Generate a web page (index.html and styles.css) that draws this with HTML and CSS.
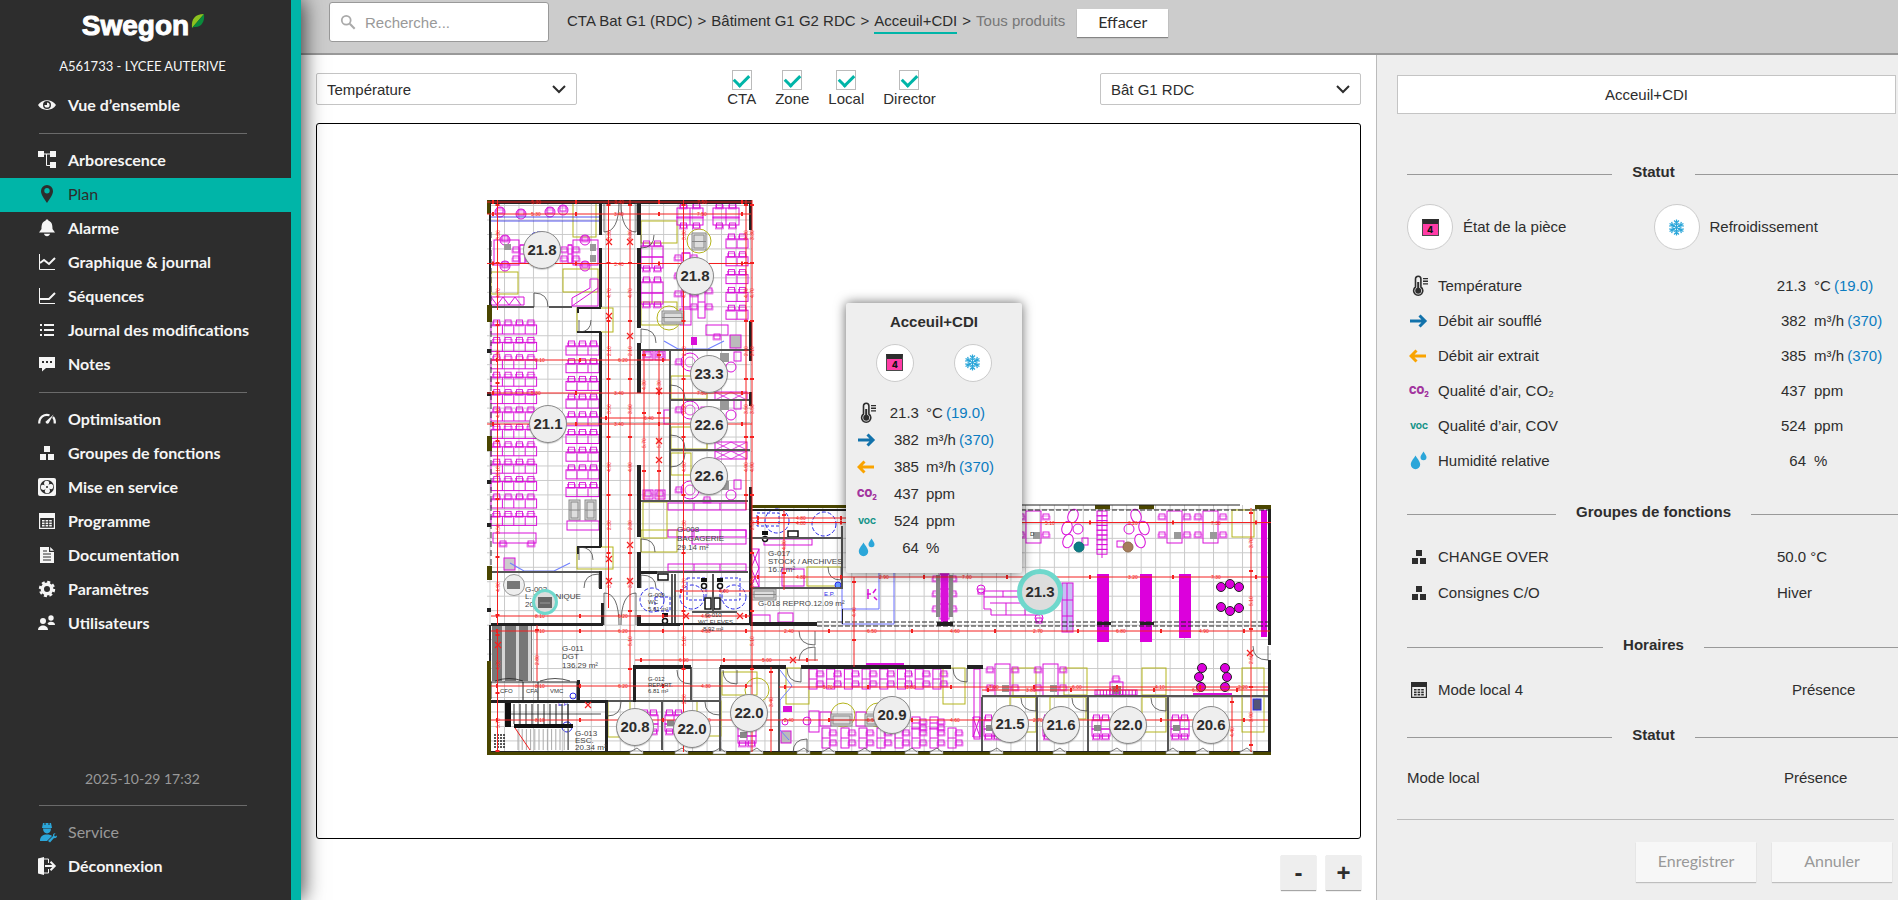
FILE: index.html
```html
<!DOCTYPE html>
<html lang="fr">
<head>
<meta charset="utf-8">
<title>Swegon - Plan</title>
<link rel="stylesheet" href="styles.css">
</head>
<body>
<svg class="defs" aria-hidden="true">
  <symbol id="i-groups" viewBox="0 0 18 18"><path d="M6 2h6v6H6zM2 10h6v6H2zM10 10h6v6h-6z"/></symbol>
  <symbol id="i-cal" viewBox="0 0 18 18"><path d="M1 1h16v16H1zM2.200 6v9.800h13.600V6z" fill-rule="evenodd"/><path d="M4 8h2.600v1.600H4zM7.600 8h2.600v1.600H7.600zM11.200 8h2.600v1.600h-2.600zM4 10.400h2.600V12H4zM7.600 10.400h2.600V12H7.600zM11.200 10.400h2.600V12h-2.600zM4 12.800h2.600v1.600H4zM7.600 12.800h2.600v1.600H7.600zM11.200 12.800h2.600v1.600h-2.600z"/></symbol>
  <symbol id="i-snow" viewBox="0 0 18 18"><g fill="none" stroke="#2ba6d9" stroke-width="1.300"><path id="arm" d="M9 9V.500M6.400 1.600 9 4.200l2.600-2.600M6.800 4.300 9 6.500l2.200-2.200"/><use href="#arm" transform="rotate(60 9 9)"/><use href="#arm" transform="rotate(120 9 9)"/><use href="#arm" transform="rotate(180 9 9)"/><use href="#arm" transform="rotate(240 9 9)"/><use href="#arm" transform="rotate(300 9 9)"/></g></symbol>
  <symbol id="i-temp" viewBox="0 0 20 22"><path d="M6.500 12V4a2.700 2.700 0 0 1 5.400 0v8a4.600 4.600 0 1 1-5.400 0z" fill="none" stroke="#2d2d2d" stroke-width="1.600"/><circle cx="9.200" cy="15.800" r="3"/><path d="M8.200 7h2v8h-2zM14 3h5v1.300h-5zM14 5.600h5v1.300h-5zM14 8.200h5v1.300h-5z"/></symbol>
  <symbol id="i-supply" viewBox="0 0 20 22"><path d="M1 11h15M10.500 5.500 16 11l-5.500 5.500" fill="none" stroke="#1272ab" stroke-width="3"/></symbol>
  <symbol id="i-extract" viewBox="0 0 20 22"><path d="M17 11H2M7.500 5.500 2 11l5.500 5.500" fill="none" stroke="#f9a300" stroke-width="3"/></symbol>
  <symbol id="i-hum" viewBox="0 0 20 22"><path fill="#2ba6d9" d="M6.500 5.500c2.500 4 4.700 6 4.700 9a4.700 4.700 0 0 1-9.400 0c0-3 2.200-5 4.700-9zM14.500 1.500c1.500 2.500 3 4 3 5.700a3 3 0 0 1-6 0c0-1.700 1.500-3.200 3-5.700z"/></symbol>
</svg>

<nav class="sidebar">
  <a class="logo" href="#"><span>Swegon</span><svg width="14" height="16" viewBox="0 0 14 16"><path fill="#8cc21f" d="M1 15C0 6 4 1 13 1z"/><path fill="#0a8a3c" d="M1 15 13 1c1 8-3 14-10 13z"/></svg></a>
  <p class="site">A561733 - LYCEE AUTERIVE</p>
  <ul class="menu">
    <li><a href="#"><svg viewBox="0 0 18 18"><path fill-rule="evenodd" d="M0 9c4-6.500 14-6.500 18 0-4 6.500-14 6.500-18 0zm9-4a4 4 0 1 0 0 8 4 4 0 0 0 0-8zm0 1.400a2.600 2.600 0 1 1-2.600 2.600L9 9z"/></svg>Vue d’ensemble</a></li>
  </ul>
  <hr>
  <ul class="menu">
    <li><a href="#"><svg viewBox="0 0 18 18"><path d="M0 0h6v6H0zM12 0h6v6h-6zM12 11h6v6h-6z"/><path d="M6 3h6M8.500 3v11.500H12" fill="none" stroke="#f5f5f5"/></svg>Arborescence</a></li>
    <li class="active"><a href="#"><svg viewBox="0 0 18 18"><path fill-rule="evenodd" d="M9 0a6 6 0 0 1 6 6c0 4-3.500 8-6 12-2.500-4-6-8-6-12a6 6 0 0 1 6-6zm0 3a2.700 2.700 0 1 0 0 5.400A2.700 2.700 0 0 0 9 3z"/></svg>Plan</a></li>
    <li><a href="#"><svg viewBox="0 0 18 18"><path d="M9 .500c.9 0 1.500.5 1.500 1.300C14 3 14.500 6 14.500 10L17 13.500H1L3.500 10C3.500 6 4 3 7.500 1.800 7.500 1 8.100.5 9 .5zM6 14.800h6c-.3 1.500-1.400 2.500-3 2.500s-2.700-1-3-2.500z"/></svg>Alarme</a></li>
    <li><a href="#"><svg viewBox="0 0 18 18"><path d="M1.500 1v15.500H17" fill="none" stroke="#f5f5f5"/><path d="m2 10 4-3 5 4 6-6" fill="none" stroke="#f5f5f5" stroke-width="2"/></svg>Graphique &amp; journal</a></li>
    <li><a href="#"><svg viewBox="0 0 18 18"><path d="M1.500 1v15.500H17" fill="none" stroke="#f5f5f5"/><path d="M2 12h9l6-6" fill="none" stroke="#f5f5f5" stroke-width="2"/></svg>Séquences</a></li>
    <li><a href="#"><svg viewBox="0 0 18 18"><path d="M2 3h2v2H2zM6 3h10v2H6zM2 8h2v2H2zM6 8h10v2H6zM2 13h2v2H2zM6 13h10v2H6z"/></svg>Journal des modifications</a></li>
    <li><a href="#"><svg viewBox="0 0 18 18"><path fill-rule="evenodd" d="M1 2h16v11H8l-4 3.500V13H1zm3 4v2h2V6zm4 0v2h2V6zm4 0v2h2V6z"/></svg>Notes</a></li>
  </ul>
  <hr>
  <ul class="menu">
    <li><a href="#"><svg viewBox="0 0 18 18"><path d="M1.200 13.500C1.200 7 6 3.800 11.500 5.300M15 7c1.400 1.500 2 4 1.800 6.500" fill="none" stroke="#f5f5f5" stroke-width="2.200"/><path d="M15.500 4.500 10.800 13c-1 1.500-3.800.5-3-1.500z"/></svg>Optimisation</a></li>
    <li><a href="#"><svg><use href="#i-groups"/></svg>Groupes de fonctions</a></li>
    <li><a href="#"><svg viewBox="0 0 18 18"><rect width="18" height="18" rx="2"/><circle cx="9" cy="9" r="7" fill="#2d2d2d"/><path id="blade" d="M9 9C5.500 8 5 3.500 8 2.800c3.500-.5 4.500 2.500 1 6.200z"/><use href="#blade" transform="rotate(90 9 9)"/><use href="#blade" transform="rotate(180 9 9)"/><use href="#blade" transform="rotate(270 9 9)"/><circle cx="9" cy="9" r="1" fill="#2d2d2d"/></svg>Mise en service</a></li>
    <li><a href="#"><svg><use href="#i-cal"/></svg>Programme</a></li>
    <li><a href="#"><svg viewBox="0 0 18 18"><path d="M2 1h9v5h5v11H2zM12.200 1 16 4.800h-3.800z"/><path d="M5 8h8M5 11h8M5 14h8M5 5h4" fill="none" stroke="#2d2d2d"/></svg>Documentation</a></li>
    <li><a href="#"><svg viewBox="0 0 18 18"><circle cx="9" cy="9" r="4.700" fill="none" stroke="#f5f5f5" stroke-width="3.400"/><circle cx="9" cy="9" r="7" fill="none" stroke="#f5f5f5" stroke-width="2.400" stroke-dasharray="3 2.498"/></svg>Paramètres</a></li>
    <li><a href="#"><svg viewBox="0 0 18 18"><circle cx="5" cy="7" r="3"/><path d="M0 16c0-6 10-6 10 0z"/><circle cx="13" cy="4" r="2.700"/><path d="M9.500 9.500c1.500-2.700 7.500-2.700 7.500 1.500h-6.200z"/></svg>Utilisateurs</a></li>
  </ul>
  <div class="sidebar-foot">
    <p class="clock">2025-10-29 17:32</p>
    <hr>
    <ul class="menu">
      <li class="muted"><a href="#"><svg viewBox="0 0 18 18"><path fill="#2ba6d9" d="M5 0h1.500v2h1V0h3v2h1V0H13l1 5H4zM5 5.500h8C13 12 5 12 5 5.500zM2 18c0-5 3-6.500 7-6.500 2.500 0 4 .5 5 1.500l-5 5zM10 18l5-5c-.3-2 1-3 2.500-2.500L16 12l1 1.500 2-1c.2 2-1.500 3-3 2.500L12 19.500z"/></svg>Service</a></li>
      <li><a href="#"><svg viewBox="0 0 18 18"><path d="M0 1.500 6 0v18l-6-1.500z"/><path d="M6 2h4.500v4M10.500 12v4H6" fill="none" stroke="#f5f5f5"/><path d="M7 9h9M12.500 4.800 16.700 9l-4.200 4.200" fill="none" stroke="#f5f5f5" stroke-width="2"/></svg>Déconnexion</a></li>
    </ul>
  </div>
</nav>

<div class="content">
  <header class="topbar">
    <label class="search"><svg viewBox="0 0 18 18" width="16" height="16"><circle cx="7" cy="7" r="5" fill="none" stroke="#aaa" stroke-width="2"/><path d="m11 11 5.500 5.500" stroke="#aaa" stroke-width="2.400"/></svg><input type="text" placeholder="Recherche..." aria-label="Recherche"></label>
    <nav class="crumbs"><a href="#">CTA Bat G1 (RDC)</a><i>&gt;</i><a href="#">Bâtiment G1 G2 RDC</a><i>&gt;</i><a href="#" class="current">Acceuil+CDI</a><i>&gt;</i><span>Tous produits</span></nav>
    <button class="btn" type="button">Effacer</button>
  </header>
  <div class="body">
    <main class="main">
      <div class="tools">
        <span class="select"><select aria-label="Mesure"><option>Température</option></select><svg viewBox="0 0 14 9"><path d="m1 1 6 6 6-6"/></svg></span>
        <div class="checks">
          <label><input type="checkbox" checked>CTA</label>
          <label><input type="checkbox" checked>Zone</label>
          <label><input type="checkbox" checked>Local</label>
          <label><input type="checkbox" checked>Director</label>
        </div>
        <span class="select"><select aria-label="Plan"><option>Bât G1 RDC</option></select><svg viewBox="0 0 14 9"><path d="m1 1 6 6 6-6"/></svg></span>
      </div>
      <div class="plan">
        <svg id="floor" class="floor" viewBox="317 124 1043 714"></svg>
        <div id="pins"></div>
        <section class="popup">
          <h2>Acceuil+CDI</h2>
          <div class="popup-states"><span class="disc"><i class="room">4</i></span><span class="disc"><svg><use href="#i-snow"/></svg></span></div>
          <ul class="readings">
            <li><svg><use href="#i-temp"/></svg><b>21.3</b><span>°C <em>(19.0)</em></span></li>
            <li><svg><use href="#i-supply"/></svg><b>382</b><span>m³/h <em>(370)</em></span></li>
            <li><svg><use href="#i-extract"/></svg><b>385</b><span>m³/h <em>(370)</em></span></li>
            <li><i class="co2">CO<small>2</small></i><b>437</b><span>ppm</span></li>
            <li><i class="voc">VOC</i><b>524</b><span>ppm</span></li>
            <li><svg><use href="#i-hum"/></svg><b>64</b><span>%</span></li>
          </ul>
        </section>
      </div>
      <div class="zoom"><button type="button">-</button><button type="button">+</button></div>
    </main>
    <aside class="panel">
      <div class="room-name">Acceuil+CDI</div>
      <div class="sections">
        <h3>Statut</h3>
        <div class="states">
          <div><span class="disc"><i class="room">4</i></span>État de la pièce</div>
          <div><span class="disc"><svg><use href="#i-snow"/></svg></span>Refroidissement</div>
        </div>
        <ul class="rows values">
          <li><svg><use href="#i-temp"/></svg><span>Température</span><b>21.3</b><span>°C <em>(19.0)</em></span></li>
          <li><svg><use href="#i-supply"/></svg><span>Débit air soufflé</span><b>382</b><span>m³/h <em>(370)</em></span></li>
          <li><svg><use href="#i-extract"/></svg><span>Débit air extrait</span><b>385</b><span>m³/h <em>(370)</em></span></li>
          <li><i class="co2">CO<small>2</small></i><span>Qualité d’air, CO₂</span><b>437</b><span>ppm</span></li>
          <li><i class="voc">VOC</i><span>Qualité d’air, COV</span><b>524</b><span>ppm</span></li>
          <li><svg><use href="#i-hum"/></svg><span>Humidité relative</span><b>64</b><span>%</span></li>
        </ul>
        <h3>Groupes de fonctions</h3>
        <ul class="rows groups">
          <li><svg><use href="#i-groups"/></svg><span>CHANGE OVER</span><span>50.0 °C</span></li>
          <li><svg><use href="#i-groups"/></svg><span>Consignes C/O</span><span>Hiver</span></li>
        </ul>
        <h3>Horaires</h3>
        <ul class="rows hours">
          <li><svg><use href="#i-cal"/></svg><span>Mode local 4</span><span>Présence</span></li>
        </ul>
        <h3>Statut</h3>
        <ul class="rows mode">
          <li><span>Mode local</span><span>Présence</span></li>
        </ul>
      </div>
      <div class="actions"><button class="btn" type="button" disabled>Enregistrer</button><button class="btn" type="button" disabled>Annuler</button></div>
    </aside>
  </div>
</div>
<script src="plan.js"></script>
</body>
</html>
```
FILE: styles.css
```css
* { box-sizing: border-box; }
body {
  margin: 0;
  min-height: 100vh;
  display: flex;
  background: #fff;
  color: #2d2d2d;
  font: 15px/20px "Liberation Sans", Arial, sans-serif;
}
ul, p, h2, h3 { margin: 0; padding: 0; list-style: none; }
a { color: inherit; text-decoration: none; }
button, input, select { font: inherit; color: inherit; }
.defs { position: absolute; width: 0; height: 0; }

.sidebar {
  flex: none;
  width: 301px;
  padding-top: 10px;
  display: flex;
  flex-direction: column;
  background: #2d2d2d;
  border-right: 10px solid #00b5a8;
  box-shadow: 2px 0 20px rgba(0, 0, 0, .75);
  color: #f5f5f5;
  font-family: Lato, sans-serif;
  z-index: 1;
}
.logo {
  display: flex;
  justify-content: center;
  align-items: flex-start;
  gap: 2px;
  height: 36px;
  padding-right: 4px;
  font: bold 28px/32px "Liberation Sans", Arial, sans-serif;
  -webkit-text-stroke: 1px #fff;
  color: #fff;
}
.logo svg { margin-top: 3px; }
.site { padding: 10px 6px 13px 0; text-align: center; font-size: 13px; }
.menu a {
  display: flex;
  align-items: center;
  gap: 12px;
  height: 34px;
  padding: 0 0 2px 38px;
  font-size: 16px;
  font-weight: 700;
}
.menu svg { width: 18px; height: 18px; fill: #f5f5f5; overflow: visible; }
.menu .active a { background: #00b5a8; color: #2d2d2d; font-weight: 400; }
.menu .active svg { fill: #2d2d2d; }
.menu .muted a { color: #999; font-weight: 400; }
.sidebar hr { width: 208px; margin: 10px 0 10px 39px; border: 0; border-top: 1px solid #6a6a6a; }
.sidebar-foot { margin-top: auto; padding-bottom: 16px; }
.clock { padding-right: 6px; margin-bottom: 16px; text-align: center; font-size: 14px; color: #999; }

.content { flex: 1; min-width: 0; display: flex; flex-direction: column; }
.topbar {
  display: flex;
  align-items: flex-start;
  height: 55px;
  padding-left: 28px;
  background: #ccc;
  border-bottom: 2px solid #999;
}
.search {
  display: flex;
  align-items: center;
  gap: 9px;
  width: 220px;
  height: 40px;
  margin: 2px 18px 0 0;
  padding-left: 10px;
  background: #fff;
  border: 1px solid #999;
  border-radius: 3px;
}
.search input { flex: 1; min-width: 0; border: 0; outline: 0; padding: 2px 0 0; background: none; }
.search input::placeholder { color: #999; opacity: 1; }
.crumbs { display: flex; margin: 10px 12px 0 0; line-height: 22px; }
.crumbs i { padding: 0 5px; font-style: normal; font-size: 15px; }
.crumbs span { color: #777; }
.crumbs .current { border-bottom: 2px solid #00b5a8; }
.btn {
  border: 0;
  background: #fff;
  box-shadow: 0 1px 1px rgba(0, 0, 0, .35);
  font-family: Lato, sans-serif;
  font-size: 16px;
}
.topbar .btn { width: 91px; height: 28px; margin-top: 9px; padding: 0 0 2px; }

.body { flex: 1; display: flex; }
.main { flex: 1; min-width: 0; padding: 15px 15px 10px; display: flex; flex-direction: column; }
.tools { display: flex; justify-content: space-between; height: 53px; }
.select { position: relative; width: 261px; height: 32px; margin-top: 3px; }
.select select {
  width: 100%;
  height: 100%;
  appearance: none;
  padding: 1px 30px 0 10px;
  background: #fff;
  border: 1px solid #c4c4c4;
  border-radius: 2px;
}
.select svg {
  position: absolute;
  right: 11px;
  top: 12px;
  width: 14px;
  height: 9px;
  fill: none;
  stroke: #2d2d2d;
  stroke-width: 2;
  pointer-events: none;
}
.checks { display: flex; gap: 19px; margin-right: 14px; }
.checks label { display: flex; flex-direction: column; align-items: center; line-height: 18px; }
.checks input {
  appearance: none;
  display: grid;
  place-items: center;
  width: 20px;
  height: 20px;
  margin: 0;
  border: 1px solid #bbb;
  background: #fff;
}
.checks input:checked::after {
  content: "";
  width: 12px;
  height: 7px;
  margin-bottom: 3px;
  border: solid #00b5a8;
  border-width: 0 0 3px 3px;
  transform: rotate(-45deg);
}
.plan { position: relative; border: 1px solid #000; border-radius: 3px; }
.floor { display: block; width: 100%; height: auto; }
.pin {
  position: absolute;
  transform: translate(-50%, -50%);
  width: 38px;
  height: 38px;
  padding: 0;
  border: 1px solid #8a8a8a;
  border-radius: 50%;
  background: #eee;
  box-shadow: 0 1px 1px rgba(0, 0, 0, .2);
  font-weight: 700;
}
.pin.selected { width: 46px; height: 46px; border: 5px solid #6fd8cc; background: #ddd; box-shadow: none; }
.popup {
  position: absolute;
  left: 51%;
  top: 25%;
  margin-left: -3px;
  width: 176px;
  padding: 9px 0 11px;
  background: #eee;
  border-radius: 2px;
  box-shadow: 0 0 12px rgba(0, 0, 0, .6);
}
.popup h2 { font-size: 15px; line-height: 20px; text-align: center; }
.disc {
  flex: none;
  display: grid;
  place-items: center;
  width: 46px;
  height: 46px;
  background: #fff;
  border: 1px solid #ccc;
  border-radius: 50%;
}
.disc svg { width: 17px; height: 17px; }
.room {
  width: 17px;
  height: 17px;
  background: #ff3ca6;
  border: 1px solid #4a4a4a;
  border-top: 5px solid #2d2d2d;
  color: #111;
  font: 800 9px/11px Inter, sans-serif;
  text-align: center;
}
.co2, .voc { font: 900 10px/12px Inter, sans-serif; color: #a2359e; white-space: nowrap; }
.co2 small { font-size: 7px; vertical-align: sub; line-height: 7px; }
.voc { font-size: 8px; font-weight: 800; color: #159488; padding-left: 1px; }
.popup-states { display: flex; justify-content: center; gap: 40px; margin: 12px 0 18px; }
.popup .disc { width: 38px; height: 38px; }
.readings li { display: grid; grid-template-columns: 20px 42px 1fr; align-items: center; height: 27px; padding-left: 11px; }
.readings svg, .rows svg { width: 20px; height: 22px; fill: #2d2d2d; }
b { font-weight: 400; text-align: right; }
.readings span { padding-left: 7px; white-space: nowrap; }
em { font-style: normal; color: #0b7cc1; margin-left: -1px; }
.zoom { display: flex; justify-content: flex-end; gap: 10px; padding-top: 16px; }
.zoom button { width: 35px; height: 35px; padding: 0; border: 0; background: #eee; box-shadow: 0 1px 1px rgba(0, 0, 0, .35); font: bold 24px/32px "Liberation Sans", Arial, sans-serif; }

.panel { flex: none; width: 522px; padding: 20px 0 18px 20px; overflow: hidden; background: #eee; border-left: 1px solid #bbb; display: flex; flex-direction: column; }
.room-name { width: 499px; height: 39px; border: 1px solid #c4c4c4; background: #fff; text-align: center; line-height: 37px; }
.sections { margin: 48px -2px 0 10px; }
.sections h3 { display: flex; align-items: center; gap: 20px; height: 20px; font-size: 15px; }
.sections h3::before, .sections h3::after { content: ""; flex: 1; height: 1px; margin-top: 4px; background: #999; }
.states { display: grid; grid-template-columns: 1fr 1fr; margin: 22px 0 18px; }
.states div { display: flex; align-items: center; gap: 10px; }
.rows li { display: grid; align-items: center; height: 36px; padding-left: 2px; }
.rows li > :first-child + span { padding-left: 9px; }
.rows b + span { padding-left: 8px; }
.values { margin-bottom: 24px; }
.values li { grid-template-columns: 20px 304px 73px 1fr; height: 35px; }
.groups { margin: 17px 0 24px; }
.groups li { grid-template-columns: 20px 348px 1fr; }
.hours { margin: 17px 0; }
.hours li { grid-template-columns: 20px 363px 1fr; }
.groups svg, .hours svg { height: 18px; }
.mode { margin-top: 15px; }
.mode li { grid-template-columns: 368px 1fr; padding-left: 0; }
.actions { display: flex; justify-content: flex-end; gap: 16px; margin: auto 4px 0 0; padding: 22px 2px 0 0; border-top: 1px solid #bbb; }
.actions .btn { width: 120px; height: 40px; padding: 0 0 3px; background: #f7f7f7; box-shadow: 0 1px 1px rgba(0, 0, 0, .2); color: #999; }
```
FILE: plan.js
```js
const svg = document.getElementById('floor');
let out = '';

const M = '#d911d9', R = '#f42020', K = '#222', Y = '#b5b51c', B = '#2a2ae8';
const path = (d, stroke, w = 1, extra = '') => `<path d="${d}" fill="none" stroke="${stroke}" stroke-width="${w}" ${extra}/>`;
const rect = (x, y, w, h, fill, stroke = 'none', sw = 1) => `<rect x="${x}" y="${y}" width="${w}" height="${h}" fill="${fill}" stroke="${stroke}" stroke-width="${sw}"/>`;
const line = (x1, y1, x2, y2, c, w = 1, extra = '') => path(`M${x1} ${y1}L${x2} ${y2}`, c, w, extra);
const circle = (x, y, r, fill, stroke, sw = 1) => `<circle cx="${x}" cy="${y}" r="${r}" fill="${fill}" stroke="${stroke}" stroke-width="${sw}"/>`;
const label = (x, y, size, t, c = '#333', rot = 0) => `<text x="${x}" y="${y}" font-size="${size}" fill="${c}" transform="rotate(${rot} ${x} ${y})">${t}</text>`;
const chair = (x, y) => rect(x, y, 6, 5, 'none', M, .9) + rect(x - 1, y + 2, 8, 4, 'none', M, .5);

// A row of n desks with one chair each, above (side -1) or below (side 1)
function desks(x, y, n, w, h, side) {
  let s = rect(x, y, n * w, h, 'none', M);
  for (let i = 0; i < n; i++) {
    if (i) s += line(x + i * w, y, x + i * w, y + h, M);
    s += side < 0 ? chair(x + i * w + w / 2 - 3, y - 5) : chair(x + i * w + w / 2 - 3, y + h - 2);
  }
  return s;
}
// A standing column of desks with chairs at both sides
function column(x, y, n, w, h) {
  let s = rect(x, y, w, n * h, 'none', M);
  for (let i = 0; i < n; i++) {
    s += line(x, y + i * h, x + w, y + i * h, M);
    s += chair(x - 7, y + i * h + 2) + chair(x + w + 1, y + i * h + 2);
  }
  return s;
}
// A standing pair of desks with chairs at the right side only
function pair(x, y, h) {
  return rect(x, y, 8, 2 * h, 'none', M) + line(x, y + h, x + 8, y + h, M) + chair(x + 8, y + 2) + chair(x + 8, y + h + 2);
}
const door = (x, y, dx, dy) => path(`M${x} ${y}v${dy}M${x} ${y + dy}Q${x + dx} ${y + dy} ${x + dx} ${y}`, '#444', .8);
const desk = (x, y) => rect(x, y, 15, 32, 'none', M) + rect(x + 7, y + 21, 7, 7, '#999') +
  chair(x - 8, y + 3) + chair(x - 8, y + 21) + chair(x + 17, y + 3) + chair(x + 17, y + 21);
const round = (x, y) => circle(x, y, 9, 'none', M) + circle(x, y, 5, 'none', M, .7) + chair(x - 14, y - 3) + chair(x + 11, y - 3) + chair(x + 14, y + 7);
const machine = (x, y, w, h) => rect(x, y, w, h, '#ddd', '#888') + rect(x + 2, y + 2, w - 4, h - 4, 'none', '#888') + line(x, y + h / 2, x + w, y + h / 2, '#888');
const cross = (x, y) => path(`M${x - 3} ${y - 3}l6 6M${x - 3} ${y + 3}l6 -6`, R, 1.2);

// Floor and tile grid
const outline = 'M487 200H752V505H1271V755H487z';
out += `<defs><pattern id="tiles" x="504" y="219.500" width="14.470" height="14.470" patternUnits="userSpaceOnUse"><path d="M.5 0V15M0 .5H15" stroke="#c9c9c9" stroke-width="1" fill="none"/></pattern></defs>`;
out += `<path d="${outline}" fill="#fff"/><path d="${outline}" fill="url(#tiles)"/>`;

// Clearance zones
[[573,202,23,35],[491,272,27,22],[563,269,35,23],[577,308,36,24],[641,221,36,22],[641,302,36,23],[671,376,36,23],[671,427,36,22],[671,453,20,22],
 [643,502,24,36],[641,530,36,22],[577,547,36,22],[608,701,22,36],[697,701,24,35],[722,672,35,23],[807,567,35,19],[786,668,23,36],[943,668,22,36],
 [1232,510,22,27],[1013,668,23,29],[1064,668,23,27],[1142,668,24,27],[1142,697,24,35],[1242,668,22,64],[1010,697,26,35],[1050,697,36,22]
].forEach(a => out += rect(...a, 'none', Y));
[[699,241],[669,318],[757,690],[843,715],[878,715]].forEach(([x, y]) => out += circle(x, y, 12, 'none', Y));

// Furniture, long wing
for (let i = 0; i < 12; i++) out += desks(491, 325 + i * 17.4, 4, 11.400, 9, -1);
for (let i = 0; i < 9; i++) out += desks(566, 346 + i * 17.700, 3, 11, 9, -1);
out += rect(493, 533, 43, 10, 'none', M) + chair(500, 541) + chair(528, 541) + rect(504, 558, 11, 12, '#ccc', M);
[[497,208],[518,210],[547,208],[560,206],[502,262],[502,236],[582,236],[582,262]].forEach(([x, y]) => out += chair(x, y) + circle(x + 3, y + 4, 5, 'none', M));
out += rect(494, 240, 25, 25, 'none', M) + rect(573, 240, 25, 25, 'none', M) + rect(504, 244, 7, 6, '#999') + rect(590, 244, 6, 7, '#999') + rect(590, 255, 6, 7, '#999');
out += column(520, 245, 2, 5, 9) + column(568, 245, 2, 4, 9);
out += path('M491 305v-8h33v8zM491 297l6 8 6-8 6 8 6-8 6 8M572 306v-8l18-10v-9h8v27zM572 306l26-18', M);
out += desks(677, 208, 2, 13, 10, -1) + desks(677, 217, 2, 13, 8, 1) + desks(713, 208, 2, 13, 10, -1) + desks(713, 217, 2, 13, 8, 1);
for (let i = 0; i < 5; i++) out += desks(726, 239 + i * 17.800, 2, 11, 9, -1);
out += desks(641, 246, 2, 11, 11, -1) + desks(641, 257, 2, 11, 11, 1) + desks(641, 282, 2, 11, 11, -1) + desks(641, 293, 2, 11, 11, 1);
out += column(682, 253, 3, 8, 18) + column(698, 286, 2, 7, 16) + rect(680, 309, 11, 16, 'none', M) + rect(706, 325, 22, 10, 'none', M) + chair(714, 334) + rect(691, 337, 6, 8, M) + rect(730, 335, 11, 13, '#bbb', M);
[[643,351],[655,351],[643,490],[655,490]].forEach(([x, y]) => out += rect(x, y, 10, 9, 'none', M) + chair(x + 2, y + 1));
[362, 410, 490].forEach(y => out += round(690, y) + circle(731, y + 5, 5, 'none', M) + rect(720, y - 9, 9, 9, '#999') + rect(734, y - 10, 7, 9, 'none', M));
[392, 442, 451].forEach(y => out += rect(715, y, 32, 8, 'none', M) + path(`M715 ${y}l16 8 16-8M715 ${y + 8}l16-8 16 8`, M, .8));
out += rect(664, 410, 6, 14, 'none', M) + machine(692, 233, 14, 17) + machine(662, 311, 22, 13) + machine(569, 500, 11, 20) + machine(585, 500, 11, 20) + rect(567, 521, 32, 9, 'none', M);
[[668,503],[668,564],[668,530]].forEach(([x, y]) => out += rect(x, y, 78, 7, 'none', M) + line(x + 26, y, x + 26, y + 7, M) + line(x + 52, y, x + 52, y + 7, M));
out += rect(692, 530, 54, 14, 'none', M);

// Furniture, library wing
out += rect(764, 539, 48, 6, 'none', M) + rect(782, 569, 22, 17, 'none', M) + rect(751, 549, 8, 38, 'none', M) + path('M751 549l8 19M759 549l-8 19M751 568l8 19M759 568l-8 19', M) + machine(752, 589, 24, 11) + rect(752, 615, 18, 8, 'none', M) + rect(778, 613, 15, 9, 'none', M);
out += column(940, 574, 3, 9, 15) + rect(941, 574, 7, 48, M) + rect(936, 575, 4, 42, '#888') + rect(949, 575, 4, 42, '#888');
out += path('M984 591h56v24h-49v-6h-7zM990 603h50M984 597h56M1003 591v6M1021 591v6M1006 603v12M1025 603v12', M) + path('M868 589v10M876 589l-3 4M871 594h-4M877 600l-3-3', M, 1.5);
[[981,589],[1039,618]].forEach(([x, y]) => out += circle(x, y, 4, 'none', M) + rect(x - 3, y, 6, 5, 'none', M));
[[1026,511],[1167,511],[1203,511],[995,664],[1043,664]].forEach(([x, y]) => out += desk(x, y));
for (let i = 0; i < 9; i++) out += rect(1097, 511 + i * 4.800, 10, 4.800, 'none', M);
out += line(1102, 511, 1102, 558, M);
[[1073,516],[1067,528],[1068,541],[1136,516],[1144,528],[1140,541]].forEach(([x, y]) => out += `<ellipse cx="${x}" cy="${y}" rx="5" ry="7" fill="#fff" stroke="${M}" transform="rotate(${x > 1100 ? -20 : 20} ${x} ${y})"/>`);
out += circle(1078, 529, 5, 'none', M) + circle(1129, 529, 5, 'none', M) + rect(1082, 538, 6, 7, 'none', M) + rect(1117, 541, 7, 6, 'none', M) + circle(1079, 547, 5, '#0b7d85', '#0b6a75') + circle(1128, 547, 5, '#a57c5c', '#8d6a4c');
out += rect(1097, 574, 12, 68, '#dc00dc') + rect(1140, 574, 12, 68, '#dc00dc') + rect(1179, 574, 12, 64, '#dc00dc') + rect(1261, 510, 6, 127, '#dc00dc');
out += rect(1062, 583, 11, 49, '#c9bdf5', M) + line(1067, 583, 1067, 632, M) + line(1062, 600, 1073, 600, M) + line(1062, 616, 1073, 616, M);
[[1221,587],[1230,584],[1239,587],[1221,607],[1230,611],[1239,608],[1202,668],[1199,677],[1201,687],[1225,668],[1227,677],[1225,687]].forEach(([x, y]) => out += circle(x, y, 4.500, '#dc00dc', K));
out += rect(1095, 690, 42, 5, 'none', M) + rect(1110, 682, 13, 13, 'none', M) + chair(1113, 676) + rect(1112, 686, 9, 8, '#888') + line(1193, 694, 1232, 694, M, 2);
for (let i = 0; i < 13; i++) out += line(1097 + i * 3.200, 690, 1097 + i * 3.200, 695, M);

// Furniture, southern rooms
for (let i = 0; i < 8; i++) out += pair(809 + i * 17.700, 669, 10);
[822, 841, 859, 877, 895, 912, 930, 948].forEach(x => out += pair(x, 728, 10));
out += pair(912, 717, 6) + pair(930, 717, 6);
out += rect(809, 711, 10, 21, 'none', M) + circle(807, 721, 4, 'none', M) + rect(820, 712, 11, 14, 'none', M) + rect(856, 712, 10, 14, 'none', M) + machine(831, 714, 21, 12) + machine(865, 714, 18, 12);
out += rect(974, 669, 6, 70, 'none', M) + path('M973 717h7v20h-7zl7 20M980 717l-7 20', M) + rect(866, 663, 38, 2, M) + rect(783, 706, 9, 6, M) + rect(781, 731, 10, 12, '#bbb', M) + circle(785, 722, 3, 'none', M);
[[640,709],[665,709],[738,721],[1092,714],[1171,714],[1043,714],[984,714]].forEach(([x, y]) => out += desks(x, y + 6, 2, 9, 9, -1) + desks(x, y + 15, 2, 9, 7, 1) + rect(x + 2, y + 11, 7, 6, '#888'));

// Blue sanitary and sliding-screen marks
out += path('M491 217H599M491 221H599', B, .8) + path('M528 239a12 12 0 0 1 22 0', B, 1, 'stroke-dasharray="4 2"');
[[652,600],[692,597],[734,597],[777,521],[824,524]].forEach(([x, y]) => out += circle(x, y, 12, 'none', B, 1).replace('/>', ' stroke-dasharray="4 2"/>'));
[[687,578,19,22],[720,578,20,22],[655,597,15,14],[757,513,22,13]].forEach(([x, y, w, h]) => out += path(`M${x} ${y}h${w}v${h}h-${w}z`, B, 1, 'stroke-dasharray="3 2"'));
out += path('M664 341l14 8h30l16-8M510 563l14 8h30l16-8', '#7080ff', 1.200) + path('M780 670l12 16-12 14v30l9 10', '#7080ff') + path('M842 573v51h52v-51M842 609h37v-36', '#6a70ff');
out += circle(567, 727, 5, 'none', B) + circle(573, 696, 3, 'none', B) + circle(838, 585, 3, '#69f', B) + label(824, 596, 6, 'E.P.', B) + label(558, 706, 6, 'E.P.', B) + rect(1253, 699, 8, 11, '#557', B);
[[701,578],[717,578],[662,613],[762,531]].forEach(([x, y]) => out += rect(x, y, 6, 4, '#111') + circle(x + 3, y + 8, 2.500, '#fff', '#111', 1.500));
[[658,574,10,6],[705,598,6,11],[714,598,6,11],[788,531,10,6]].forEach(([x, y, w, h]) => out += rect(x, y, w, h, '#fff', '#111', 1.500));

// Archives shelving and stairs
out += rect(492, 626, 40, 55, '#777');
[502, 516, 528].forEach(x => out += rect(x, 626, 3, 55, '#d5d5d5'));
out += path('M491 682H577V700M523 682V700M538 682V700M491 699V682', K) + path('M495 681q14-5 28 0M540 681q15-5 30 0', K, .8);
out += rect(505, 703, 6, 24, '#111') + rect(514, 724, 59, 4, '#111');
for (let i = 0; i < 10; i++) out += line(514 + i * 6, 704, 514 + i * 6, 724, K);
for (let i = 0; i < 13; i++) out += line(518 + i * 4.200, 729, 518 + i * 4.200, 750, '#aaa');
out += path('M511 714h90M568 704v46', K, .8) + line(515, 728, 530, 750, R);
for (let i = 0; i < 5; i++) out += line(494, 735 + i * 3, 506, 735 + i * 3, K, 1.600, 'stroke-dasharray="2 1"');

// Thin partitions
[[491,307,534,307],[549,307,572,307],[641,350,750,350],[670,350,670,500],[670,400,750,400],[670,450,750,450],[641,501,748,501],[641,572,748,572],
 [491,572,600,572],[672,574,672,624],[675,574,675,624],[713,574,713,612],[692,612,737,612],[750,538,843,538],[750,588,843,588],[842,526,842,588],
 [982,696,1270,696],[982,697,982,752],[1037,697,1037,752],[1088,697,1088,752],[1168,697,1168,752],[662,701,662,750],[607,701,720,701],[691,667,691,701],[720,667,720,752],[779,667,779,752]
].forEach(a => out += line(...a, '#555', 2));

// Load-bearing walls
[[487,200,265,4],[599,200,3,35],[599,248,3,59],[599,332,3,215],[599,571,3,18],[601,603,3,22],[637,200,4,35],[637,248,4,80],[637,343,4,50],[637,465,4,72],[637,552,4,36],[637,615,4,10],
 [749,200,3,30],[749,321,3,40],[749,392,3,14],[749,487,3,138],[577,307,24,2],[577,307,2,6],[577,331,24,2],[577,546,24,2],[577,546,2,8],
 [491,623,112,3],[637,623,43,3],[675,623,77,2],[750,622,67,4],[937,622,16,4],[752,509,94,2],[641,571,16,3],[842,609,1,15],
 [633,665,58,4],[633,667,3,35],[720,665,66,4],[801,665,150,4],[967,665,16,4],[491,700,114,3],[605,700,3,52],[577,680,3,22],
 [1268,507,3,138],[1268,660,3,95],[1097,622,14,3],[1140,622,14,3],[489,200,2,106],[489,625,2,130],[487,751,784,3]
].forEach(a => out += rect(...a, K));
[[487,752,784,3],[487,305,5,17],[487,436,5,15],[487,566,5,14],[487,661,4,94],[752,505,94,3],[1095,505,15,4],[1139,505,15,4],[1255,505,16,4],[487,200,3,14]].forEach(a => out += rect(...a, '#4a4600'));
[349,392,480,523,608].forEach(y => out += rect(487, y, 4, 4, K));
out += path('M491 232V305M491 322V436M491 451V566', '#333', 1, 'stroke-dasharray="6 3"') + path('M1022 505H1240', K, 1) + path('M846 510H1268M817 622H1268M817 626H1268', K, 1, 'stroke-dasharray="5 2"');
[630,675,713,750,797,822,858,905,930,990,1053,1110,1166,1196,1240].forEach(x => out += rect(x, 751, 13, 3, '#fff', '#777', .6) + path(`M${x} 752l7-4 5 4`, '#555', .8));
[[641,235,13,13],[641,343,15,-14],[534,307,14,-14],[579,320,12,12],[579,560,14,-13],[641,552,14,-13],[641,588,15,-13],[599,588,-15,-14],[604,202,15,30],[636,202,-15,30],[604,625,15,-32],[636,625,-15,-32],[670,399,15,-14],[670,449,15,-14],[670,453,15,14],[607,702,14,14],[691,670,-14,14],[720,702,-15,13],[737,670,-14,14],[801,668,-14,14],[967,668,-14,14],[841,567,-13,13],[1036,698,-15,13],[1087,698,-15,13],[1166,698,-15,13],[1268,646,-15,14],[807,753,-14,-14],[815,631,-16,14],[815,661,-16,-14]
].forEach(a => out += door(...a));

// Dimension lines
[[487,202,752],[487,214,751],[487,263.500,752],[491,360,670],[487,393,750],[600,418,670],[487,424,752],[491,616,750],[491,631,1270],[635,660,818],[491,686,752],[491,720,1268],[752,518,846],[752,522.500,1271],[752,577,1268],[779,687,1268],[982,690,1268],[675,591,750]].forEach(([x1, y, x2]) => {
  out += line(x1, y, x2, y, R);
  for (let x = x1 + 6; x < x2; x += 83) {
    out += path(`M${x} ${y - 2}v4`, R, 2);
    if (x + 56 < x2) out += label(x + 38, y + 2, 5, (2.2 + (x * 7 % 60) / 10).toFixed(2), R);
  }
});
[[497.5,200,310],[497.5,320,625],[497.5,630,752],[608.500,200,608],[630,200,700],[644,350,500],[659,350,500],[683.500,200,752],[746,200,510],[752,200,752],[537,625,681],[771,667,752],[784,510,590],[854,577,667],[1251,508,752],[1232,697,752]].forEach(([x, y1, y2]) => {
  out += line(x, y1, x, y2, R);
  for (let y = y1 + 5; y < y2; y += 58) {
    out += path(`M${x - 2} ${y}h4`, R, 2);
    if (y + 38 < y2) out += label(x + 2, y + 35, 5, (1.8 + (y * 3 % 40) / 10).toFixed(2), R, -90);
  }
});
[[609,242],[630,242],[609,316],[630,336],[659,391],[659,441],[659,460],[609,559],[609,581],[630,545],[630,581],[588,705],[793,660],[1250,653],[686,616],[740,616],[498,645]].forEach(([x, y]) => out += cross(x, y));

// Room names
[[677,532,'G-008'],[677,541,'BAGAGERIE'],[677,550,'29.14 m²'],[768,556,'G-017'],[768,564,'STOCK / ARCHIVES'],[768,572,'16.7 m²'],[758,606,'G-018 REPRO.12.09 m²'],[575,736,'G-013'],[575,743,'ESC.'],[575,750,'20.34 m²'],[525,592,'G-003'],[525,599,'L. TECHNIQUE'],[525,607,'20.41 m²']].forEach(([x, y, t]) => out += label(x, y, 8, t, '#444'));
[[562,651,'G-011'],[562,659,'DGT'],[562,668,'136.29 m²']].forEach(([x, y, t]) => out += label(x, y, 8, t, '#444'));
[[648,597,'G-009'],[648,604,'WC'],[648,611,'5.61 m²'],[705,617,'G-010'],[698,624,'WC ELEVES'],[703,631,'8.92 m²'],[648,681,'G-012'],[648,687,'REPART.'],[648,693,'6.81 m²'],[500,693,'CFO'],[526,693,'CFA'],[550,693,'VMC'],[1030,536,'D']].forEach(([x, y, t]) => out += label(x, y, 6, t));

// Air handling unit and director
out += circle(514, 585, 10.500, '#eee', '#999') + rect(507, 581, 13, 8, '#777') + circle(545, 602, 11.500, '#ddd', '#6fd8cc', 3) + rect(538, 597, 14, 11, '#666') + line(540, 603, 550, 603, '#999');

svg.innerHTML = out;

const pins = [[542,250,'21.8'],[695,276,'21.8'],[709,374,'23.3'],[709,425,'22.6'],[709,476,'22.6'],[548,424,'21.1'],[635,727,'20.8'],[692,729,'22.0'],[749,713,'22.0'],[892,715,'20.9'],[1010,724,'21.5'],[1061,725,'21.6'],[1128,725,'22.0'],[1211,725,'20.6'],[1040,592,'21.3']];
const host = document.getElementById('pins');
pins.forEach(([x, y, t], i) => {
  const b = document.createElement('button');
  b.type = 'button';
  b.className = i === pins.length - 1 ? 'pin selected' : 'pin';
  b.textContent = t;
  b.style.left = (x - 317) / 10.43 + '%';
  b.style.top = (y - 124) / 7.14 + '%';
  host.append(b);
});
```
